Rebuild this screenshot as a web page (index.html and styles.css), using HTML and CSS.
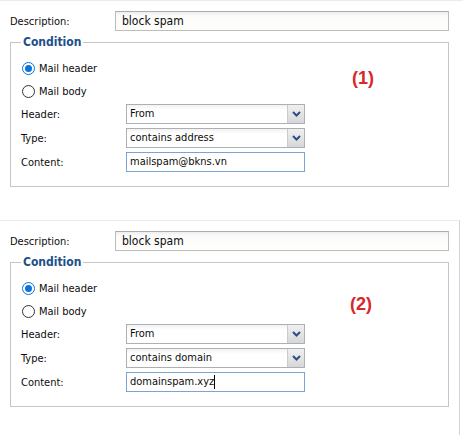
FILE: index.html
```html
<!DOCTYPE html>
<html>
<head>
<meta charset="utf-8">
<link rel="stylesheet" href="styles.css">
</head>
<body>
<div class="panel">
  <div class="desc-row">
    <span class="desc-label">Description:</span>
    <div class="desc-input">block spam</div>
  </div>
  <fieldset class="cond">
    <legend class="cond-legend">Condition</legend>
    <div class="radio-row first"><span class="radio checked"></span><span>Mail header</span></div>
    <div class="radio-row"><span class="radio"></span><span>Mail body</span></div>
    <div class="field-row first"><span class="field-label">Header:</span><div class="select"><span class="select-text">From</span><span class="select-btn"><svg width="9" height="6" viewBox="0 0 9 6"><path d="M1 1 L4.5 4.5 L8 1" fill="none" stroke="#2d4d86" stroke-width="2"/></svg></span></div></div>
    <div class="field-row"><span class="field-label">Type:</span><div class="select"><span class="select-text">contains address</span><span class="select-btn"><svg width="9" height="6" viewBox="0 0 9 6"><path d="M1 1 L4.5 4.5 L8 1" fill="none" stroke="#2d4d86" stroke-width="2"/></svg></span></div></div>
    <div class="field-row"><span class="field-label">Content:</span><div class="text-input">mailspam@bkns.vn</div></div>
  </fieldset>
  <span class="tag tag-1">(1)</span>
</div>
<div class="panel panel-2">
  <div class="desc-row">
    <span class="desc-label">Description:</span>
    <div class="desc-input">block spam</div>
  </div>
  <fieldset class="cond">
    <legend class="cond-legend">Condition</legend>
    <div class="radio-row first"><span class="radio checked"></span><span>Mail header</span></div>
    <div class="radio-row"><span class="radio"></span><span>Mail body</span></div>
    <div class="field-row first"><span class="field-label">Header:</span><div class="select"><span class="select-text">From</span><span class="select-btn"><svg width="9" height="6" viewBox="0 0 9 6"><path d="M1 1 L4.5 4.5 L8 1" fill="none" stroke="#2d4d86" stroke-width="2"/></svg></span></div></div>
    <div class="field-row"><span class="field-label">Type:</span><div class="select"><span class="select-text">contains domain</span><span class="select-btn"><svg width="9" height="6" viewBox="0 0 9 6"><path d="M1 1 L4.5 4.5 L8 1" fill="none" stroke="#2d4d86" stroke-width="2"/></svg></span></div></div>
    <div class="field-row"><span class="field-label">Content:</span><div class="text-input">domainspam.xyz<span class="caret"></span></div></div>
  </fieldset>
  <span class="tag tag-2">(2)</span>
</div>
</body>
</html>
```
FILE: styles.css
```css
html, body {
  margin: 0;
  padding: 0;
  background: #ffffff;
}
body {
  font-family: "DejaVu Sans Condensed", "DejaVu Sans", sans-serif;
  font-size: 11px;
  color: #0c0c0c;
}
.panel {
  position: relative;
  box-sizing: border-box;
  height: 220px;
  width: 463px;
  border-top: 1px solid #ebebeb;
  padding: 10px 0 0 10px;
}
.panel-2 {
  width: 460px;
  height: 215px;
  border-right: 1px solid #cdd6df;
}
.desc-row {
  display: flex;
  align-items: center;
  height: 20px;
}
.desc-label {
  width: 105px;
}
.desc-input {
  box-sizing: border-box;
  width: 334px;
  height: 20px;
  border: 1px solid #b9bdbd;
  border-top-color: #a9adad;
  background: linear-gradient(#eeeeee 0, #fbfbfb 4px, #fffefb 100%);
  padding: 0 6px;
  line-height: 18px;
  font-size: 12px;
}
.cond {
  box-sizing: border-box;
  width: 439px;
  margin: 3px 0 0 0;
  padding: 0 10px 14px 10px;
  border: 1px solid #c2c6ca;
}
.cond-legend {
  margin-left: 0;
  padding: 0 2px;
  font-weight: bold;
  font-size: 12px;
  line-height: 16px;
  color: #1d4f8a;
}
.radio-row {
  display: flex;
  align-items: center;
  height: 20px;
  margin-top: 3px;
  padding-left: 1px;
}
.radio-row.first {
  margin-top: 8px;
}
.radio {
  box-sizing: border-box;
  width: 13px;
  height: 13px;
  border: 1px solid #333;
  border-radius: 50%;
  margin-right: 4px;
  background: #fff;
  display: flex;
  align-items: center;
  justify-content: center;
}
.radio.checked {
  border-color: #0a74da;
}
.radio.checked::after {
  content: "";
  width: 7px;
  height: 7px;
  border-radius: 50%;
  background: #0a74da;
}
.field-row {
  display: flex;
  align-items: center;
  height: 20px;
  margin-top: 4px;
}
.field-row.first {
  margin-top: 3px;
}
.field-label {
  width: 105px;
}
.select {
  box-sizing: border-box;
  width: 179px;
  height: 20px;
  border: 1px solid #acb0b4;
  background: linear-gradient(#f2f2f2 0, #ffffff 5px, #ffffff 100%);
  display: flex;
  align-items: stretch;
}
.select-text {
  flex: 1;
  padding-left: 3px;
  line-height: 18px;
  font-size: 11px;
}
.select-btn {
  width: 16px;
  border-left: 1px solid #c9cbcd;
  background: linear-gradient(#f0f0f0, #d6d7d8);
  display: flex;
  align-items: center;
  justify-content: center;
}
.text-input {
  box-sizing: border-box;
  width: 179px;
  height: 20px;
  border: 1px solid #7ba3d3;
  background: #fff;
  padding-left: 3px;
  line-height: 18px;
  display: flex;
  align-items: center;
}
.caret {
  display: inline-block;
  width: 1px;
  height: 14px;
  background: #000;
}
.tag {
  position: absolute;
  font-family: "Liberation Sans", Arial, sans-serif;
  font-weight: bold;
  font-size: 18px;
  color: #d8262c;
}
.tag-1 {
  left: 352px;
  top: 67px;
}
.tag-2 {
  left: 350px;
  top: 73px;
}
```
